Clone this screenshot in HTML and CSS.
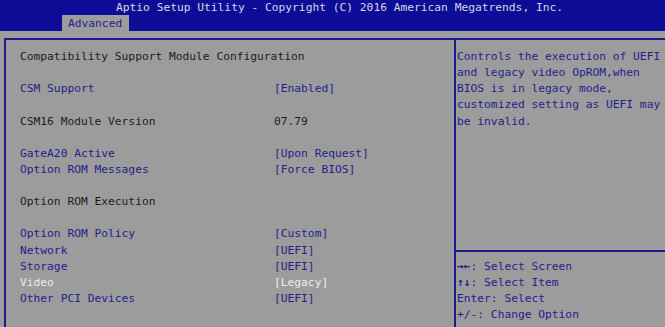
FILE: index.html
```html
<!DOCTYPE html>
<html>
<head>
<meta charset="utf-8">
<link rel="stylesheet" href="styles.css">
</head>
<body>
<header class="top">
  <div class="title">Aptio Setup Utility - Copyright (C) 2016 American Megatrends, Inc.</div>
  <div class="tabs"><span class="tab">Advanced</span></div>
</header>
<main class="frame">
  <section class="left">
    <div class="row"><span class="static">Compatibility Support Module Configuration</span></div>
    <div class="row"></div>
    <div class="row item"><span>CSM Support</span><span>[Enabled]</span></div>
    <div class="row"></div>
    <div class="row static"><span>CSM16 Module Version</span><span>07.79</span></div>
    <div class="row"></div>
    <div class="row item"><span>GateA20 Active</span><span>[Upon Request]</span></div>
    <div class="row item"><span>Option ROM Messages</span><span>[Force BIOS]</span></div>
    <div class="row"></div>
    <div class="row static"><span>Option ROM Execution</span></div>
    <div class="row"></div>
    <div class="row item"><span>Option ROM Policy</span><span>[Custom]</span></div>
    <div class="row item"><span>Network</span><span>[UEFI]</span></div>
    <div class="row item"><span>Storage</span><span>[UEFI]</span></div>
    <div class="row item selected"><span>Video</span><span>[Legacy]</span></div>
    <div class="row item"><span>Other PCI Devices</span><span>[UEFI]</span></div>
  </section>
  <aside class="right">
    <div class="help">Controls the execution of UEFI<br>and legacy video OpROM,when<br>BIOS is in legacy mode,<br>customized setting as UEFI may<br>be invalid.</div>
    <div class="keys">
      <div><span class="arr">→←</span>: Select Screen</div>
      <div><span class="arr">↑↓</span>: Select Item</div>
      <div>Enter: Select</div>
      <div>+/-: Change Option</div>
    </div>
  </aside>
</main>
</body>
</html>
```
FILE: styles.css
```css
html, body {
  margin: 0;
  padding: 0;
  height: 100%;
  overflow: hidden;
}
body {
  background: #9c9c9c;
  font-family: "DejaVu Sans Mono", "Liberation Mono", monospace;
  font-size: 11.25px;
  line-height: 16.13px;
  color: #1c1c1c;
}
.top {
  background: #0c0c96;
  height: 31px;
  display: flex;
  flex-direction: column;
}
.title {
  color: #d8d8e0;
  padding-left: 116px;
  height: 15px;
  line-height: 16px;
  white-space: nowrap;
}
.tabs {
  padding-left: 62px;
  display: flex;
  flex: 1;
  align-items: flex-end;
}
.tab {
  background: #9c9c9c;
  color: #1e1e8c;
  height: 16px;
  line-height: 17px;
  padding: 0 7px 0 6px;
}
.frame {
  margin: 7px 0 0 4px;
  height: 300px;
  border-top: 2px solid #1a1a8a;
  border-left: 2px solid #1a1a8a;
  display: flex;
  overflow: hidden;
}
.left {
  width: 448px;
  flex: none;
  padding: 9px 0 0 14px;
  box-sizing: border-box;
}
.row {
  display: grid;
  grid-template-columns: 254px auto;
  height: 16.13px;
  white-space: nowrap;
}
.item {
  color: #1e1e8c;
}
.static {
  color: #1c1c1c;
}
.selected {
  color: #ececec;
}
.right {
  border-left: 2px solid #1a1a8a;
  display: flex;
  flex-direction: column;
  flex: 1;
  min-width: 0;
}
.help {
  height: 210px;
  box-sizing: border-box;
  padding: 9px 0 0 1px;
  color: #1e1e8c;
  white-space: nowrap;
}
.keys {
  border-top: 2px solid #1a1a8a;
  padding: 7px 0 0 1px;
  color: #1e1e8c;
  white-space: nowrap;
}
.arr {
  font-weight: bold;
}
```
